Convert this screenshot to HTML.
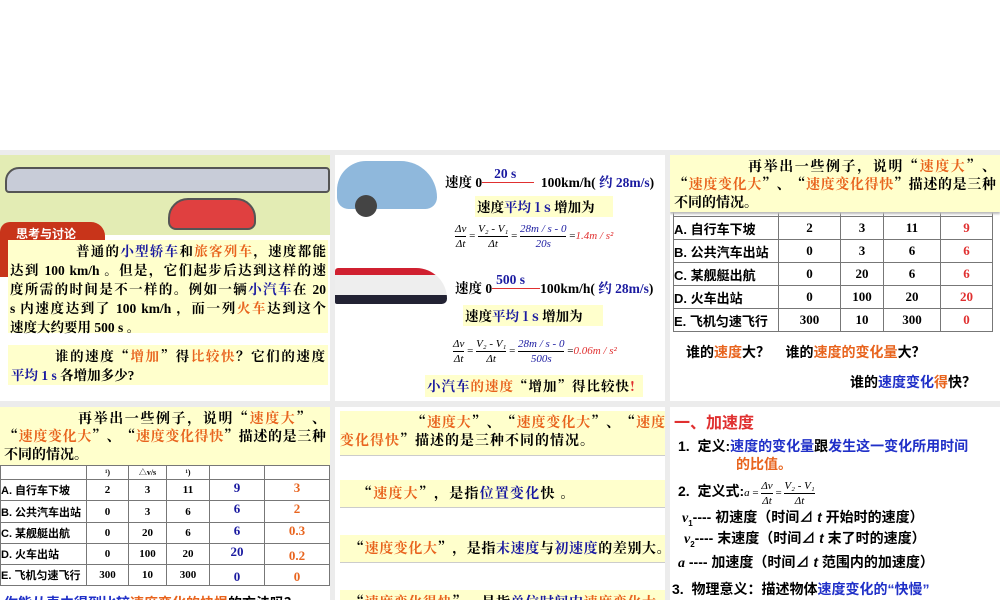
<!DOCTYPE html>
<html><head><meta charset="utf-8"><style>
*{margin:0;padding:0;box-sizing:border-box}
body{width:1000px;height:600px;background:#ececec;position:relative;overflow:hidden;font-family:"Liberation Serif","Noto Serif CJK SC",serif;color:#000}
.top{position:absolute;left:0;top:0;width:1000px;height:150px;background:#fff}
.p{position:absolute;background:#fff;overflow:hidden}
.a{position:absolute}
.y{background:#ffffcc}
.c{font-family:"Noto Serif CJK SC",serif}
.L{white-space:nowrap;text-align:justify;text-align-last:justify;text-justify:inter-character}
.o{color:#e8641e}.b{color:#1a1aa0}.r{color:#e03030}.bl{color:#2030c8}
.s{font-family:"Liberation Sans","Noto Sans CJK SC",sans-serif}
table{border-collapse:collapse;position:absolute}
td{border:1px solid #777;text-align:center;font-weight:bold;padding:0}
.f{display:inline-block;vertical-align:middle;text-align:center;font-style:italic;font-size:11px;line-height:14px}
.f span{display:block}
.f .n{border-bottom:1px solid #000}
</style></head><body>
<div class="top"></div>

<!-- panel 1 -->
<div class="p" style="left:0;top:155px;width:330px;height:246px">
 <div class="a" style="left:0;top:0;width:330px;height:80px;background:#e3ecb4"></div>
 <div class="a" style="left:5px;top:12px;width:325px;height:26px;background:#c8ccd8;border:2px solid #555;border-radius:14px 4px 4px 4px"></div>
 <div class="a" style="left:168px;top:43px;width:88px;height:32px;background:#e04040;border:2px solid #555;border-radius:20px 20px 8px 8px"></div>
 <div class="a" style="left:0;top:67px;width:105px;height:55px;background:#c8341a;border-radius:10px 14px 0 0"></div>
 <div class="a s" style="left:16px;top:70px;color:#fff;font-size:12px;font-weight:bold">思考与讨论</div>
 <div class="a y" style="left:8px;top:85px;width:320px;height:93px;font-size:13.5px;font-weight:bold;line-height:19px;padding:2px 2px">
  <div class="L" style="padding-left:66px">普通的<span class="b">小型轿车</span>和<span class="o">旅客列车</span>，速度都能</div>
  <div class="L">达到 100 km/h 。但是，它们起步后达到这样的速</div>
  <div class="L">度所需的时间是不一样的。例如一辆<span class="b">小汽车</span>在 20</div>
  <div class="L">s 内速度达到了 100 km/h ，而一列<span class="o">火车</span>达到这个</div>
  <div>速度大约要用 500 s 。</div>
 </div>
 <div class="a y" style="left:8px;top:190px;width:320px;height:40px;font-size:13.5px;font-weight:bold;line-height:19px;padding:1px 3px">
  <div class="L" style="padding-left:44px">谁的速度<span class="c">“</span><span class="o">增加</span><span class="c">”</span>得<span class="o">比较快</span>？它们的速度</div>
  <div><span class="b">平均 1 s</span> 各增加多少?</div>
 </div>
</div>

<!-- panel 2 -->
<div class="p" style="left:335px;top:155px;width:330px;height:246px">
 <div class="a" style="left:2px;top:6px;width:100px;height:48px;background:#8fb8dc;border-radius:40px 50px 16px 16px"></div>
 <div class="a" style="left:20px;top:40px;width:22px;height:22px;background:#444;border-radius:50%"></div>
 <div class="a" style="left:0;top:113px;width:112px;height:36px;background:linear-gradient(#d02030 20%,#eee 20%,#eee 75%,#223 75%);border-radius:6px 60px 10px 4px"></div>
 <div class="a" style="left:110px;top:16px;font-size:13.5px;font-weight:bold;white-space:nowrap">速度 0<span style="display:inline-block;width:52px;border-bottom:1px solid #e03030;position:relative;vertical-align:4px"><span class="b" style="position:absolute;left:12px;top:-16px">20 s</span></span>&nbsp;&nbsp;100km/h( <span class="b">约 28m/s</span>)</div>
 <div class="a y c" style="left:140px;top:41px;width:138px;height:21px;font-size:13.5px;font-weight:bold;padding:0 2px">速度<span class="b">平均 1 s</span> 增加为</div>
 <div class="a" style="left:120px;top:67px;font-size:11px;white-space:nowrap"><span class="f"><span class="n">Δv</span><span>Δt</span></span> = <span class="f"><span class="n">V₂ - V₁</span><span>Δt</span></span> = <span class="f b"><span class="n">28m / s - 0</span><span>20s</span></span> =<span class="r"><i>1.4m / s²</i></span></div>
 <div class="a" style="left:120px;top:122px;font-size:13.5px;font-weight:bold;white-space:nowrap">速度 0<span style="display:inline-block;width:48px;border-bottom:1px solid #e03030;position:relative;vertical-align:4px"><span class="b" style="position:absolute;left:4px;top:-16px">500 s</span></span>100km/h( <span class="b">约 28m/s</span>)</div>
 <div class="a y c" style="left:128px;top:150px;width:140px;height:21px;font-size:13.5px;font-weight:bold;padding:0 2px">速度<span class="b">平均 1 s</span> 增加为</div>
 <div class="a" style="left:118px;top:182px;font-size:11px;white-space:nowrap"><span class="f"><span class="n">Δv</span><span>Δt</span></span> = <span class="f"><span class="n">V₂ - V₁</span><span>Δt</span></span> = <span class="f b"><span class="n">28m / s - 0</span><span>500s</span></span> =<span class="r"><i>0.06m / s²</i></span></div>
 <div class="a y c" style="left:90px;top:220px;width:218px;height:22px;font-size:13.5px;font-weight:bold;padding:0 2px;letter-spacing:1px"><span class="b">小汽车</span><span class="o">的速度</span>“增加”得比较快<span class="r">!</span></div>
</div>

<!-- panel 3 -->
<div class="p" style="left:670px;top:155px;width:330px;height:246px">
 <table style="left:3px;top:52px;width:320px;font-size:13px">
  <tr style="height:9px"><td></td><td></td><td></td><td></td><td></td></tr>
  <tr style="height:23px"><td style="text-align:left;width:105px" class="s">A. 自行车下坡</td><td style="width:62px">2</td><td style="width:43px">3</td><td style="width:57px">11</td><td class="r">9</td></tr>
  <tr style="height:23px"><td style="text-align:left" class="s">B. 公共汽车出站</td><td>0</td><td>3</td><td>6</td><td class="r">6</td></tr>
  <tr style="height:23px"><td style="text-align:left" class="s">C. 某舰艇出航</td><td>0</td><td>20</td><td>6</td><td class="r">6</td></tr>
  <tr style="height:23px"><td style="text-align:left" class="s">D. 火车出站</td><td>0</td><td>100</td><td>20</td><td class="r">20</td></tr>
  <tr style="height:23px"><td style="text-align:left" class="s">E. 飞机匀速飞行</td><td>300</td><td>10</td><td>300</td><td class="r">0</td></tr>
 </table>
 <div class="a y c" style="left:0;top:0;width:330px;height:57px;font-size:14px;font-weight:bold;line-height:18px;padding:2px 4px;box-shadow:0 2px 2px #bbb">
  <div class="L" style="padding-left:74px">再举出一些例子，说明“<span class="o">速度大</span>”、</div>
  <div class="L">“<span class="o">速度变化大</span>”、“<span class="o">速度变化得快</span>”描述的是三种</div>
  <div>不同的情况。</div>
 </div>
 <div class="a s" style="left:16px;top:187px;font-size:14px;font-weight:bold">谁的<span class="o">速度</span>大？&nbsp;&nbsp;&nbsp;&nbsp;谁的<span class="o">速度的变化量</span>大？</div>
 <div class="a s" style="left:180px;top:217px;font-size:14px;font-weight:bold">谁的<span class="bl">速度变化</span><span class="o">得</span>快？</div>
</div>

<!-- panel 4 -->
<div class="p" style="left:0;top:407px;width:330px;height:193px">
 <table style="left:0;top:58px;width:330px;font-size:11px">
  <tr style="height:14px"><td style="width:86px"></td><td style="width:42px;font-size:8px">¹)</td><td style="width:38px;font-size:8px">△v/s</td><td style="width:43px;font-size:8px">¹)</td><td style="width:55px"></td><td></td></tr>
  <tr style="height:21px"><td style="text-align:left" class="s">A. 自行车下坡</td><td>2</td><td>3</td><td>11</td><td class="b" style="font-size:13px;vertical-align:top">9</td><td class="o" style="font-size:13px;vertical-align:top">3</td></tr>
  <tr style="height:22px"><td style="text-align:left" class="s">B. 公共汽车出站</td><td>0</td><td>3</td><td>6</td><td class="b" style="font-size:13px;vertical-align:top">6</td><td class="o" style="font-size:13px;vertical-align:top">2</td></tr>
  <tr style="height:21px"><td style="text-align:left" class="s">C. 某舰艇出航</td><td>0</td><td>20</td><td>6</td><td class="b" style="font-size:13px;vertical-align:top">6</td><td class="o" style="font-size:13px;vertical-align:top">0.3</td></tr>
  <tr style="height:21px"><td style="text-align:left" class="s">D. 火车出站</td><td>0</td><td>100</td><td>20</td><td class="b" style="font-size:13px;vertical-align:top">20</td><td class="o" style="font-size:13px;vertical-align:bottom">0.2</td></tr>
  <tr style="height:21px"><td style="text-align:left" class="s">E. 飞机匀速飞行</td><td>300</td><td>10</td><td>300</td><td class="b" style="font-size:13px;vertical-align:bottom">0</td><td class="o" style="font-size:13px;vertical-align:bottom">0</td></tr>
 </table>
 <div class="a y c" style="left:0;top:0;width:330px;height:58px;font-size:14px;font-weight:bold;line-height:18px;padding:2px 4px">
  <div class="L" style="padding-left:74px">再举出一些例子，说明“<span class="o">速度大</span>”、</div>
  <div class="L">“<span class="o">速度变化大</span>”、“<span class="o">速度变化得快</span>”描述的是三种</div>
  <div>不同的情况。</div>
 </div>
 <div class="a s" style="left:4px;top:186px;font-size:14px;font-weight:bold;white-space:nowrap"><span class="bl">你能从表中得到比较</span><span class="o">速度变化的快慢</span>的方法吗？</div>
</div>

<!-- panel 5 -->
<div class="p c" style="left:335px;top:407px;width:330px;height:193px">
 <div class="a y" style="left:5px;top:4px;width:325px;height:45px;font-size:14px;font-weight:bold;line-height:18px;padding:2px 0;border-bottom:1px solid #ccc">
  <div class="L" style="padding-left:72px">“<span class="o">速度大</span>”、“<span class="o">速度变化大</span>”、“<span class="o">速度</span></div>
  <div style="letter-spacing:1px"><span class="o">变化得快</span>”描述的是三种不同的情况。</div>
 </div>
 <div class="a y" style="left:5px;top:73px;width:325px;height:28px;font-size:14px;letter-spacing:1.2px;font-weight:bold;padding:3px 0 0 18px;border-bottom:1px solid #ccc">“<span class="o">速度大</span>”，是指<span class="b">位置变化</span>快 。</div>
 <div class="a y" style="left:5px;top:128px;width:325px;height:28px;font-size:14px;letter-spacing:0.6px;font-weight:bold;padding:3px 0 0 10px;border-bottom:1px solid #ccc;white-space:nowrap">“<span class="o">速度变化大</span>”，是指<span class="b">末速度</span>与<span class="b">初速度</span>的差别大。</div>
 <div class="a y" style="left:5px;top:183px;width:325px;height:28px;font-size:14px;letter-spacing:0.6px;font-weight:bold;padding:2px 0 0 10px;white-space:nowrap">“<span class="o">速度变化得快</span>”，是指<span class="b">单位时间内</span><span class="o">速度变化大</span></div>
</div>

<!-- panel 6 -->
<div class="p s" style="left:670px;top:407px;width:330px;height:193px;font-weight:bold;font-size:14px">
 <div class="a r" style="left:4px;top:2px;font-size:16px">一、加速度</div>
 <div class="a" style="left:8px;top:29px">1. &nbsp;定义:<span class="bl">速度的变化量</span>跟<span class="bl">发生这一变化所用时间</span></div>
 <div class="a o" style="left:66px;top:47px">的比值。</div>
 <div class="a" style="left:8px;top:72px;white-space:nowrap">2. &nbsp;定义式:<span style="font-family:'Liberation Serif';font-weight:normal;font-size:11px"><i>a</i> = <span class="f"><span class="n">Δv</span><span>Δt</span></span> = <span class="f"><span class="n">V₂ - V₁</span><span>Δt</span></span></span></div>
 <div class="a" style="left:12px;top:100px"><i style="font-family:'Liberation Serif'">v</i><sub style="font-size:8px">1</sub>---- 初速度（时间⊿ <i>t</i> 开始时的速度）</div>
 <div class="a" style="left:14px;top:121px"><i style="font-family:'Liberation Serif'">v</i><sub style="font-size:8px">2</sub>---- 末速度（时间⊿ <i>t</i> 末了时的速度）</div>
 <div class="a" style="left:8px;top:145px"><i style="font-family:'Liberation Serif'">a</i> ---- 加速度（时间⊿ <i>t</i> 范围内的加速度）</div>
 <div class="a" style="left:2px;top:172px">3. &nbsp;物理意义：描述物体<span class="bl">速度变化的“快慢”</span></div>
</div>
</body></html>
